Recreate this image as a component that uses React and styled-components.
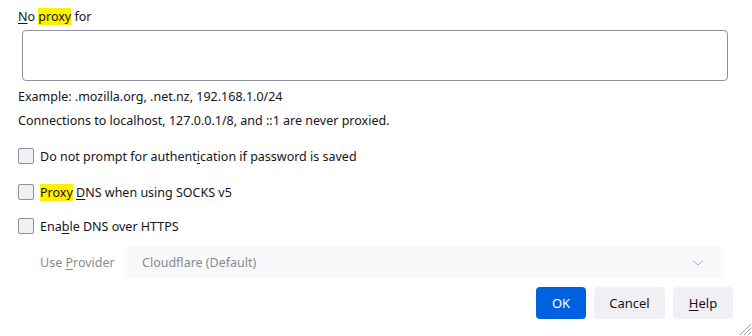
import React from "react";
import styled, { createGlobalStyle } from "styled-components";

const Global = createGlobalStyle`
  html, body {
    margin: 0;
    padding: 0;
    background: #ffffff;
  }
  body {
    font-family: "Noto Sans", "Open Sans", sans-serif;
    font-size: 12.5px;
    color: #15141a;
  }
`;

const Dialog = styled.div`
  position: relative;
  width: 752px;
  height: 336px;
  box-sizing: border-box;
  padding: 9px 19px 0 18px;
  display: flex;
  flex-direction: column;
  overflow: hidden;
`;

const Label = styled.div`
  line-height: 16px;
  height: 16px;
`;

const Mark = styled.span`
  background: #ffef00;
`;

const Key = styled.span`
  text-decoration: underline;
  text-underline-offset: 2px;
`;

const TextArea = styled.textarea`
  margin: 5px 5px 0 4px;
  height: 51px;
  box-sizing: border-box;
  border: 1px solid #8f8f9d;
  border-radius: 4px;
  resize: none;
  font: inherit;
  outline: none;
`;

const Note = styled.div`
  line-height: 16px;
  margin-top: ${(p) => p.$top}px;
`;

const CheckRow = styled.label`
  display: flex;
  align-items: center;
  gap: 6px;
  height: 20px;
  margin-top: ${(p) => p.$top}px;
`;

const Box = styled.span`
  width: 14px;
  height: 14px;
  border: 1px solid #8f8f9d;
  border-radius: 2px;
  background: #f0f0f4;
  flex: none;
`;

const ProviderRow = styled.div`
  display: flex;
  align-items: center;
  margin-top: 10px;
  padding-left: 22px;
  padding-right: 9px;
  height: 33px;
`;

const ProviderLabel = styled.span`
  color: #8a8a90;
  width: 84px;
  flex: none;
`;

const Select = styled.div`
  flex: 1;
  height: 33px;
  background: #f9f9fb;
  border-radius: 4px;
  display: flex;
  align-items: center;
  justify-content: space-between;
  padding: 0 20px 0 18px;
  color: #8a8a90;
`;

const Buttons = styled.div`
  display: flex;
  justify-content: flex-end;
  gap: 8px;
  margin-top: 8px;
`;

const Button = styled.button`
  height: 32px;
  min-width: ${(p) => p.$w}px;
  border: none;
  border-radius: 4px;
  font: inherit;
  font-size: 13px;
  padding: 0 14px;
  background: ${(p) => (p.$primary ? "#0061e0" : "#f0f0f4")};
  color: ${(p) => (p.$primary ? "#ffffff" : "#15141a")};
`;

const Grip = styled.svg`
  position: absolute;
  right: 0;
  bottom: 0;
`;

export default function App() {
  return (
    <>
      <Global />
      <Dialog>
        <Label>
          <Key>N</Key>o <Mark>proxy</Mark> for
        </Label>
        <TextArea />
        <Note $top={8}>Example: .mozilla.org, .net.nz, 192.168.1.0/24</Note>
        <Note $top={8}>
          Connections to localhost, 127.0.0.1/8, and ::1 are never proxied.
        </Note>
        <CheckRow $top={17}>
          <Box />
          <span>
            Do not prompt for authent<Key>i</Key>cation if password is saved
          </span>
        </CheckRow>
        <CheckRow $top={16}>
          <Box />
          <span>
            <Mark>Proxy</Mark> <Key>D</Key>NS when using SOCKS v5
          </span>
        </CheckRow>
        <CheckRow $top={14}>
          <Box />
          <span>
            Ena<Key>b</Key>le DNS over HTTPS
          </span>
        </CheckRow>
        <ProviderRow>
          <ProviderLabel>
            Use <Key>P</Key>rovider
          </ProviderLabel>
          <Select>
            <span>Cloudflare (Default)</span>
            <svg width="12" height="8" viewBox="0 0 12 8">
              <path d="M1 1.5 L6 6 L11 1.5" fill="none" stroke="#b0b0b8" strokeWidth="1" />
            </svg>
          </Select>
        </ProviderRow>
        <Buttons>
          <Button $primary $w={50}>OK</Button>
          <Button $w={71}>Cancel</Button>
          <Button $w={60}>
            <Key>H</Key>elp
          </Button>
        </Buttons>
        <Grip width="14" height="14" viewBox="0 0 14 14">
          <path d="M13 2 L2 13 M13 6 L6 13 M13 10 L10 13" stroke="#9a9aa0" strokeWidth="1" />
        </Grip>
      </Dialog>
    </>
  );
}
